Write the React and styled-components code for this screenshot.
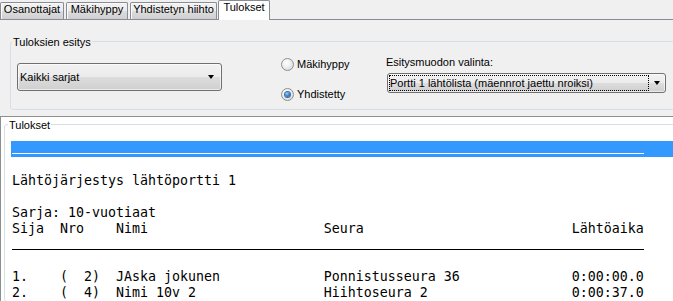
import React from "react";
import styled, { createGlobalStyle } from "styled-components";

const Global = createGlobalStyle`
  html, body { margin: 0; padding: 0; }
  body {
    background: #f0f0f0;
    overflow: hidden;
    font-family: "Liberation Sans", Arial, sans-serif;
    font-size: 11px;
    color: #000;
  }
`;

const Window = styled.div`
  width: 673px;
  height: 301px;
  display: flex;
  flex-direction: column;
  overflow: hidden;
`;

const TabStrip = styled.div`
  display: flex;
  align-items: flex-end;
  gap: 2px;
  height: 19px;
  border-bottom: 1px solid #898c95;
  flex: none;
`;

const Tab = styled.div`
  box-sizing: border-box;
  width: ${(p) => p.$w}px;
  height: ${(p) => (p.$active ? 20 : 17)}px;
  margin-bottom: ${(p) => (p.$active ? -1 : 0)}px;
  margin-left: ${(p) => (p.$active ? -1 : 0)}px;
  border: 1px solid #898c95;
  border-bottom: none;
  border-radius: 2px 2px 0 0;
  background: ${(p) =>
    p.$active
      ? "#ffffff"
      : "linear-gradient(#f2f2f2 0%, #ebebeb 50%, #dddddd 51%, #cfcfcf 100%)"};
  box-shadow: ${(p) => (p.$active ? "none" : "inset 1px 1px 0 #fafafa")};
  text-align: center;
  line-height: 13px;
  white-space: nowrap;
  position: relative;
  z-index: ${(p) => (p.$active ? 1 : 0)};
`;

const UpperPanel = styled.div`
  flex: none;
  height: 96px;
  box-sizing: border-box;
  padding: 21px 0 0 10px;
`;

const GroupBox = styled.div`
  position: relative;
  box-sizing: border-box;
  border: 1px solid #d5dfe5;
  border-radius: 3px;
  width: ${(p) => p.$w}px;
  height: ${(p) => (p.$h ? `${p.$h}px` : "auto")};
  padding: ${(p) => p.$pad};
`;

const GroupTitle = styled.span`
  position: absolute;
  top: -6px;
  left: ${(p) => p.$x}px;
  padding: 0 1px;
  line-height: 13px;
  background: ${(p) => p.$bg};
  white-space: nowrap;
`;

const PresentRow = styled.div`
  display: flex;
  align-items: flex-start;
  height: 66px;
`;

const Combo = styled.div`
  box-sizing: border-box;
  display: flex;
  align-items: center;
  width: ${(p) => p.$w}px;
  height: ${(p) => p.$h}px;
  margin-top: ${(p) => p.$mt || 0}px;
  margin-left: ${(p) => p.$ml || 0}px;
  padding: 0 ${(p) => p.$arrowGap}px 0 ${(p) => p.$padL}px;
  border: 1px solid #707070;
  border-radius: 3px;
  background: linear-gradient(#f2f2f2 0%, #ebebeb 50%, #dddddd 51%, #cfcfcf 100%);
  box-shadow: inset 0 0 0 1px rgba(255, 255, 255, 0.6);
  white-space: nowrap;
`;

const ComboText = styled.span`
  flex: 1;
  line-height: 14px;
`;

const FocusText = styled.span`
  box-sizing: border-box;
  width: ${(p) => p.$w}px;
  height: 16px;
  border: 1px dotted #000;
  line-height: 14px;
  overflow: hidden;
`;

const Arrow = styled.span`
  margin-left: auto;
  width: 0;
  height: 0;
  border-left: 3.5px solid transparent;
  border-right: 3.5px solid transparent;
  border-top: 4px solid #000;
`;

const RadioColumn = styled.div`
  display: flex;
  flex-direction: column;
  gap: 14px;
  width: 105px;
  margin-left: 59px;
  margin-top: 14px;
`;

const RadioRow = styled.label`
  display: flex;
  align-items: center;
  gap: 3px;
  height: 16px;
  line-height: 14px;
`;

const RadioCircle = styled.span`
  box-sizing: border-box;
  width: 13px;
  height: 13px;
  border-radius: 50%;
  border: 1px solid #8e8f8f;
  background: radial-gradient(circle at 40% 35%, #ffffff 0%, #f0f0f0 40%, #cfcfcf 100%);
  display: flex;
  align-items: center;
  justify-content: center;
  flex: none;
`;

const RadioDot = styled.span`
  width: 5px;
  height: 5px;
  border-radius: 50%;
  background: radial-gradient(circle at 40% 35%, #9fd0f7 0%, #2e78c9 55%, #0f4c92 100%);
  box-shadow: 0 0 0 1px #3c6fa6;
`;

const FormatColumn = styled.div`
  display: flex;
  flex-direction: column;
  margin-top: 13px;
`;

const FieldLabel = styled.div`
  line-height: 14px;
  margin-bottom: 4px;
`;

const LowerPanel = styled.div`
  flex: 1;
  box-sizing: border-box;
  width: 700px;
  background: #ffffff;
  border-top: 1px solid #8e8f8f;
  border-left: 1px solid #8e8f8f;
  padding: 7px 0 0 3px;
`;

const Memo = styled.div`
  font-family: "DejaVu Sans Mono", "Liberation Mono", monospace;
  font-size: 13.29px;
  white-space: pre;
  color: #000;
`;

const Line = styled.div`
  height: 16px;
  line-height: 16px;
  padding-left: 1px;
  background: ${(p) => (p.$selected ? "#3399ff" : "transparent")};
  color: ${(p) => (p.$selected ? "#ffffff" : "#000000")};
`;

const RuleMark = styled.div`
  box-sizing: border-box;
  width: 79ch;
  height: 13px;
  border-bottom: 1px solid currentColor;
`;

const pad = (s, n) => s + " ".repeat(Math.max(0, n - s.length));

const header =
  pad("Sija", 6) + pad("Nro", 7) + pad("Nimi", 26) + pad("Seura", 31) + "Lähtöaika";

const rows = [
  { sija: "1.", nro: "(  2)", nimi: "JAska jokunen", seura: "Ponnistusseura 36", aika: "0:00:00.0" },
  { sija: "2.", nro: "(  4)", nimi: "Nimi 10v 2", seura: "Hiihtoseura 2", aika: "0:00:37.0" },
];

const rowText = (r) =>
  pad(r.sija, 6) + pad(r.nro, 7) + pad(r.nimi, 26) + pad(r.seura, 31) + r.aika;

export default function App() {
  return (
    <>
      <Global />
      <Window>
        <TabStrip>
          <Tab $w={64}>Osanottajat</Tab>
          <Tab $w={62}>Mäkihyppy</Tab>
          <Tab $w={87}>Yhdistetyn hiihto</Tab>
          <Tab $w={52} $active>Tulokset</Tab>
        </TabStrip>

        <UpperPanel>
          <GroupBox $w={700} $h={69} $pad="0 0 0 6px">
            <GroupTitle $x={1} $bg="#f0f0f0">Tuloksien esitys</GroupTitle>
            <PresentRow>
              <Combo $w={205} $h={28} $mt={21} $padL={2} $arrowGap={7}>
                <ComboText>Kaikki sarjat</ComboText>
                <Arrow />
              </Combo>

              <RadioColumn>
                <RadioRow>
                  <RadioCircle />
                  Mäkihyppy
                </RadioRow>
                <RadioRow>
                  <RadioCircle>
                    <RadioDot />
                  </RadioCircle>
                  Yhdistetty
                </RadioRow>
              </RadioColumn>

              <FormatColumn>
                <FieldLabel>Esitysmuodon valinta:</FieldLabel>
                <Combo $w={279} $h={20} $ml={1} $padL={1} $arrowGap={5}>
                  <FocusText $w={260}>Portti 1 lähtölista (mäennrot jaettu nroiksi)</FocusText>
                  <Arrow />
                </Combo>
              </FormatColumn>
            </PresentRow>
          </GroupBox>
        </UpperPanel>

        <LowerPanel>
          <GroupBox $w={720} $pad="16px 0 0 6px">
            <GroupTitle $x={3} $bg="#ffffff">Tulokset</GroupTitle>
            <Memo>
              <Line $selected><RuleMark /></Line>
              <Line> </Line>
              <Line>Lähtöjärjestys lähtöportti 1</Line>
              <Line> </Line>
              <Line>Sarja: 10-vuotiaat</Line>
              <Line>{header}</Line>
              <Line><RuleMark /></Line>
              <Line> </Line>
              {rows.map((r) => (
                <Line key={r.sija}>{rowText(r)}</Line>
              ))}
            </Memo>
          </GroupBox>
        </LowerPanel>
      </Window>
    </>
  );
}
